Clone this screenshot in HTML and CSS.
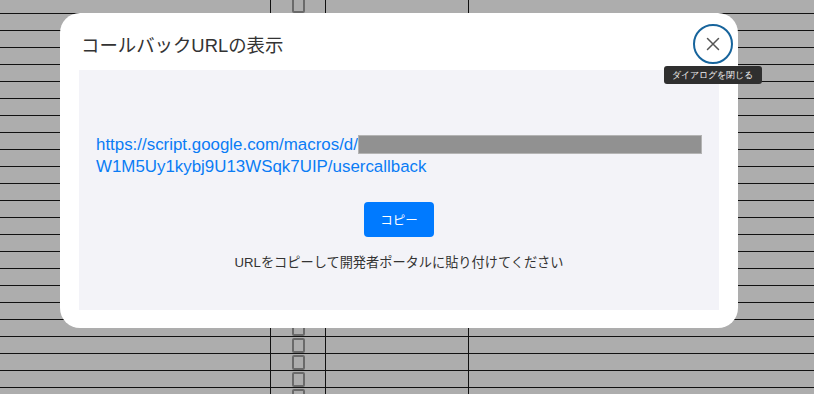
FILE: index.html
```html
<!DOCTYPE html>
<html lang="ja">

<head>
    <meta charset="UTF-8" />
    <meta name="viewport" content="width=device-width, initial-scale=1.0" />
    <title>コールバックURLの表示</title>
    <link rel="stylesheet" href="styles.css">
</head>

<body>
    <div class="sheet" id="sheet"></div>

    <div class="overlay">
        <div class="modal" role="dialog" aria-labelledby="modalTitle">
            <div class="modal-header">
                <h2 id="modalTitle" class="modal-title">コールバックURLの表示</h2>
                <button type="button" class="close-btn" aria-label="ダイアログを閉じる">
                    <svg width="14" height="14" viewBox="0 0 14 14">
                        <path d="M1.5 1.5 L12.5 12.5 M12.5 1.5 L1.5 12.5" stroke="#555" stroke-width="1.5" stroke-linecap="round" fill="none" />
                    </svg>
                    <span class="tooltip">ダイアログを閉じる</span>
                </button>
            </div>
            <div class="modal-body">
                <a class="callback-url" href="#">https://script.google.com/macros/d/<span class="redact"></span><br>W1M5Uy1kybj9U13WSqk7UIP/usercallback</a>
                <button type="button" class="copy-btn">コピー</button>
                <p class="hint">URLをコピーして開発者ポータルに貼り付けてください</p>
            </div>
        </div>
    </div>

    <script>
        // 背景のシート行を生成
        const sheet = document.getElementById('sheet');
        for (let i = 0; i < 24; i++) {
            const row = document.createElement('div');
            row.className = 'sheet-row';
            row.innerHTML = '<div class="cell"></div><div class="cell check-cell"><span class="check"></span></div><div class="cell"></div><div class="cell last"></div>';
            sheet.appendChild(row);
        }
    </script>
</body>

</html>
```

FILE: styles.css
```css
html,
body {
    margin: 0;
    height: 100%;
    overflow: hidden;
}

body {
    font-family: "Liberation Sans", "Noto Sans CJK JP", sans-serif;
    background: #adadad;
    color: #333;
    position: relative;
}

/* background sheet */
.sheet {
    margin-top: -3px;
}

.sheet-row {
    display: grid;
    grid-template-columns: 271px 55px 143px 1fr;
    height: 17px;
    box-sizing: border-box;
    border-bottom: 1px solid #111;
}

.cell {
    border-right: 1px solid #111;
}

.cell.last {
    border-right: none;
}

.check-cell {
    display: flex;
    justify-content: center;
    align-items: center;
    padding-left: 1px;
}

.check {
    width: 9px;
    height: 11px;
    border: 2px solid #6a6a6a;
    border-radius: 2px;
}

/* dialog */
.overlay {
    position: absolute;
    inset: 0;
    padding: 13px 0 0 60px;
}

.modal {
    width: 678px;
    height: 315px;
    box-sizing: border-box;
    background: #fff;
    border-radius: 20px;
    display: flex;
    flex-direction: column;
}

.modal-header {
    height: 57px;
    box-sizing: border-box;
    padding: 5px 5px 0 21px;
    display: flex;
    align-items: center;
    justify-content: space-between;
}

.modal-title {
    margin: 0;
    font-size: 18.4px;
    font-weight: normal;
    color: #333;
}

.close-btn {
    position: relative;
    width: 40px;
    height: 40px;
    box-sizing: border-box;
    border: 2px solid #17649c;
    border-radius: 50%;
    background: #fff;
    padding: 0;
    display: flex;
    align-items: center;
    justify-content: center;
}

.tooltip {
    position: absolute;
    top: 40px;
    left: 50%;
    transform: translateX(-50%);
    white-space: nowrap;
    background: #2f2f2f;
    color: #f2f2f2;
    font-size: 9.4px;
    line-height: 18px;
    padding: 0 9px 0 8px;
    border-radius: 3px;
}

.modal-body {
    margin: 0 19px 18px;
    flex: 1;
    background: #f3f3f8;
    padding: 64px 17px 0;
    display: flex;
    flex-direction: column;
    align-items: center;
}

.callback-url {
    align-self: stretch;
    color: #0a7cf5;
    text-decoration: none;
    font-size: 16.9px;
    line-height: 22px;
}

.redact {
    display: inline-block;
    width: 342px;
    height: 17px;
    background: #919191;
    border: 1px solid #b4b4b4;
    vertical-align: -4px;
}

.copy-btn {
    margin-top: 24px;
    width: 70px;
    height: 35px;
    border: none;
    border-radius: 4px;
    background: #007aff;
    color: #fff;
    font-family: inherit;
    font-size: 12.5px;
}

.hint {
    margin: 17px 0 0;
    font-size: 13.2px;
    line-height: 18px;
    color: #333;
}
```
